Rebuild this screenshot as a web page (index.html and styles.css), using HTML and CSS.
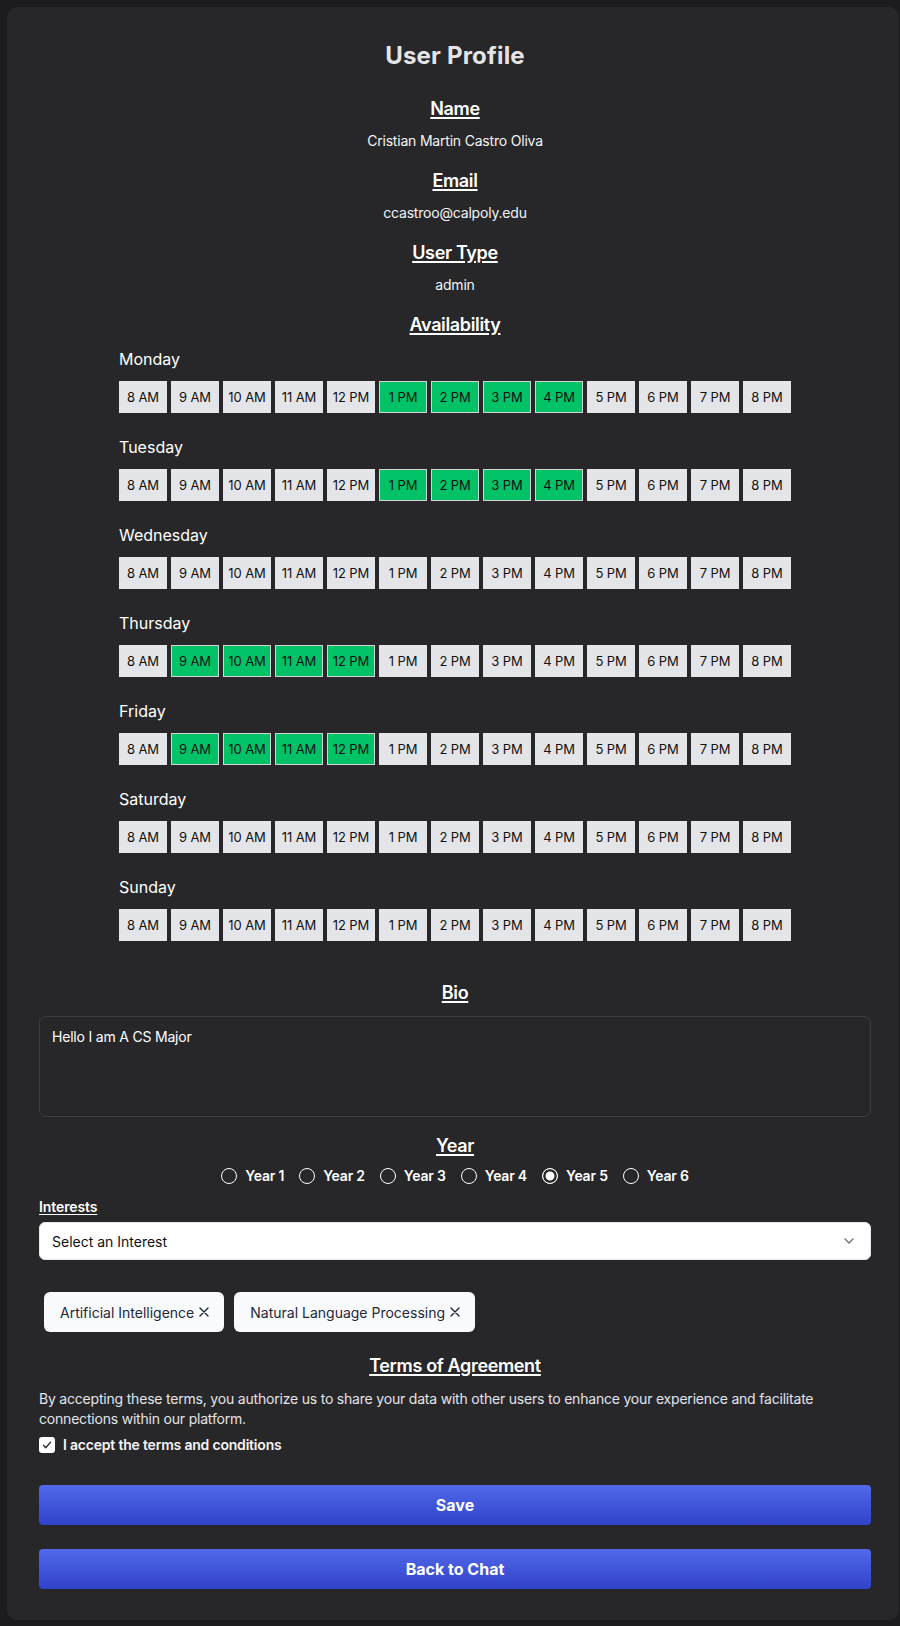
FILE: index.html
```html
<!DOCTYPE html>
<html lang="en">
<head>
<meta charset="utf-8">
<title>User Profile</title>
<link rel="stylesheet" href="styles.css">
</head>
<body>
<main class="card">
  <h1 class="title">User Profile</h1>

  <section class="field">
    <h2 class="label">Name</h2>
    <p class="value">Cristian Martin Castro Oliva</p>
  </section>
  <section class="field">
    <h2 class="label">Email</h2>
    <p class="value">ccastroo@calpoly.edu</p>
  </section>
  <section class="field">
    <h2 class="label">User Type</h2>
    <p class="value">admin</p>
  </section>

  <h2 class="label">Availability</h2>
  <div class="schedule">
    <div class="day">
      <div class="day-name">Monday</div>
      <div class="slots">
        <span class="slot">8 AM</span><span class="slot">9 AM</span><span class="slot">10 AM</span><span class="slot">11 AM</span><span class="slot">12 PM</span><span class="slot on">1 PM</span><span class="slot on">2 PM</span><span class="slot on">3 PM</span><span class="slot on">4 PM</span><span class="slot">5 PM</span><span class="slot">6 PM</span><span class="slot">7 PM</span><span class="slot">8 PM</span>
      </div>
    </div>
    <div class="day">
      <div class="day-name">Tuesday</div>
      <div class="slots">
        <span class="slot">8 AM</span><span class="slot">9 AM</span><span class="slot">10 AM</span><span class="slot">11 AM</span><span class="slot">12 PM</span><span class="slot on">1 PM</span><span class="slot on">2 PM</span><span class="slot on">3 PM</span><span class="slot on">4 PM</span><span class="slot">5 PM</span><span class="slot">6 PM</span><span class="slot">7 PM</span><span class="slot">8 PM</span>
      </div>
    </div>
    <div class="day">
      <div class="day-name">Wednesday</div>
      <div class="slots">
        <span class="slot">8 AM</span><span class="slot">9 AM</span><span class="slot">10 AM</span><span class="slot">11 AM</span><span class="slot">12 PM</span><span class="slot">1 PM</span><span class="slot">2 PM</span><span class="slot">3 PM</span><span class="slot">4 PM</span><span class="slot">5 PM</span><span class="slot">6 PM</span><span class="slot">7 PM</span><span class="slot">8 PM</span>
      </div>
    </div>
    <div class="day">
      <div class="day-name">Thursday</div>
      <div class="slots">
        <span class="slot">8 AM</span><span class="slot on">9 AM</span><span class="slot on">10 AM</span><span class="slot on">11 AM</span><span class="slot on">12 PM</span><span class="slot">1 PM</span><span class="slot">2 PM</span><span class="slot">3 PM</span><span class="slot">4 PM</span><span class="slot">5 PM</span><span class="slot">6 PM</span><span class="slot">7 PM</span><span class="slot">8 PM</span>
      </div>
    </div>
    <div class="day">
      <div class="day-name">Friday</div>
      <div class="slots">
        <span class="slot">8 AM</span><span class="slot on">9 AM</span><span class="slot on">10 AM</span><span class="slot on">11 AM</span><span class="slot on">12 PM</span><span class="slot">1 PM</span><span class="slot">2 PM</span><span class="slot">3 PM</span><span class="slot">4 PM</span><span class="slot">5 PM</span><span class="slot">6 PM</span><span class="slot">7 PM</span><span class="slot">8 PM</span>
      </div>
    </div>
    <div class="day">
      <div class="day-name">Saturday</div>
      <div class="slots">
        <span class="slot">8 AM</span><span class="slot">9 AM</span><span class="slot">10 AM</span><span class="slot">11 AM</span><span class="slot">12 PM</span><span class="slot">1 PM</span><span class="slot">2 PM</span><span class="slot">3 PM</span><span class="slot">4 PM</span><span class="slot">5 PM</span><span class="slot">6 PM</span><span class="slot">7 PM</span><span class="slot">8 PM</span>
      </div>
    </div>
    <div class="day">
      <div class="day-name">Sunday</div>
      <div class="slots">
        <span class="slot">8 AM</span><span class="slot">9 AM</span><span class="slot">10 AM</span><span class="slot">11 AM</span><span class="slot">12 PM</span><span class="slot">1 PM</span><span class="slot">2 PM</span><span class="slot">3 PM</span><span class="slot">4 PM</span><span class="slot">5 PM</span><span class="slot">6 PM</span><span class="slot">7 PM</span><span class="slot">8 PM</span>
      </div>
    </div>
  </div>

  <h2 class="label">Bio</h2>
  <textarea class="bio">Hello I am A CS Major</textarea>

  <h2 class="label year-label">Year</h2>
  <div class="years">
    <label class="year"><span class="radio"></span>Year 1</label>
    <label class="year"><span class="radio"></span>Year 2</label>
    <label class="year"><span class="radio"></span>Year 3</label>
    <label class="year"><span class="radio"></span>Year 4</label>
    <label class="year"><span class="radio checked"></span>Year 5</label>
    <label class="year"><span class="radio"></span>Year 6</label>
  </div>

  <div class="interests-label">Interests</div>
  <div class="select">
    <span>Select an Interest</span>
    <svg class="chevron" width="10" height="6" viewBox="0 0 10 6"><path d="M1 1l4 4 4-4" fill="none" stroke="#6b7280" stroke-width="1.3" stroke-linecap="round" stroke-linejoin="round"/></svg>
  </div>

  <div class="chips">
    <span class="chip">Artificial Intelligence<svg width="10" height="10" viewBox="0 0 10 10"><path d="M1 1l8 8M9 1l-8 8" stroke="#1e293b" stroke-width="1.4" stroke-linecap="round"/></svg></span>
    <span class="chip">Natural Language Processing<svg width="10" height="10" viewBox="0 0 10 10"><path d="M1 1l8 8M9 1l-8 8" stroke="#1e293b" stroke-width="1.4" stroke-linecap="round"/></svg></span>
  </div>

  <h2 class="label terms-label">Terms of Agreement</h2>
  <p class="terms">By accepting these terms, you authorize us to share your data with other users to enhance your experience and facilitate connections within our platform.</p>
  <label class="accept"><span class="checkbox"><svg width="12" height="12" viewBox="0 0 12 12"><path d="M2.5 6.3l2.3 2.4 4.7-5.4" fill="none" stroke="#1f2937" stroke-width="1.3" stroke-linecap="round" stroke-linejoin="round"/></svg></span>I accept the terms and conditions</label>

  <button class="btn save">Save</button>
  <button class="btn back">Back to Chat</button>
</main>
</body>
</html>
```

FILE: styles.css
```css
* { box-sizing: border-box; }

html, body {
  margin: 0;
  background: #1c1c1e;
}

body {
  font-family: Inter, "Liberation Sans", sans-serif;
  color: #fff;
  padding: 7px 1px 6px 7px;
}

.card {
  background: #27272a;
  border-radius: 10px;
  padding: 33px 28px 31px 32px;
  display: flex;
  flex-direction: column;
}

.title {
  margin: 0 0 23px;
  text-align: center;
  font-size: 24px;
  line-height: 32px;
  font-weight: 700;
  letter-spacing: 0.2px;
  color: #e4e4e7;
}

.label {
  margin: 0 0 8px;
  text-align: center;
  font-size: 18px;
  line-height: 28px;
  font-weight: 600;
  letter-spacing: -0.35px;
  color: #fff;
  text-decoration: underline;
  text-decoration-thickness: 1.5px;
  text-underline-offset: 2px;
}

.value {
  margin: 0 0 16px;
  text-align: center;
  font-size: 14px;
  line-height: 20px;
  letter-spacing: -0.2px;
  color: #f4f4f5;
}

.schedule {
  align-self: center;
  margin: 0 0 38px;
}

.day + .day { margin-top: 22px; }

.day-name {
  font-size: 16px;
  line-height: 24px;
  margin-bottom: 10px;
  color: #fff;
}

.slots {
  display: flex;
  gap: 4px;
}

.slot {
  width: 48px;
  height: 32px;
  display: flex;
  align-items: center;
  justify-content: center;
  font-size: 13px;
  letter-spacing: -0.1px;
  color: #111;
  background: #e4e5e9;
  border: 1px solid #e4e5e9;
}

.slot.on {
  background: #02c268;
  border-color: #d4d4d8;
}

.bio {
  display: block;
  width: 100%;
  height: 101px;
  margin: 1px 0 0;
  padding: 10px 12px;
  resize: none;
  background: #27272a;
  border: 1px solid #3c3c41;
  border-radius: 7px;
  color: #fff;
  font-family: inherit;
  font-size: 14px;
  line-height: 20px;
  letter-spacing: -0.2px;
}

.year-label { margin-top: 15px; margin-bottom: 6px; }

.years {
  display: flex;
  justify-content: center;
  gap: 15px;
  height: 20px;
}

.year {
  display: flex;
  align-items: center;
  gap: 8px;
  font-size: 14px;
  line-height: 20px;
  font-weight: 600;
  letter-spacing: -0.2px;
  color: #fff;
}

.radio {
  width: 16px;
  height: 16px;
  border-radius: 50%;
  border: 1.5px solid #fff;
}

.radio.checked {
  background: #fff;
  box-shadow: inset 0 0 0 2.5px #27272a;
}

.interests-label {
  margin-top: 11px;
  font-size: 14px;
  line-height: 20px;
  font-weight: 600;
  letter-spacing: -0.1px;
  text-decoration: underline;
  text-underline-offset: 2px;
}

.select {
  margin-top: 5px;
  height: 38px;
  background: #fff;
  border: 1px solid #e5e7eb;
  border-radius: 6px;
  display: flex;
  align-items: center;
  justify-content: space-between;
  padding: 0 16px 0 12px;
  font-size: 14px;
  color: #111;
}

.chips {
  margin-top: 27px;
  display: flex;
  flex-wrap: wrap;
}

.chip {
  margin: 5px;
  height: 40px;
  display: flex;
  align-items: center;
  gap: 5px;
  padding: 0 15px 0 16px;
  background: #f8fafc;
  border-radius: 6px;
  font-size: 14px;
  color: #1e293b;
}

.terms-label { margin-top: 15px; margin-bottom: 9px; }

.terms {
  margin: 0;
  font-size: 14px;
  line-height: 20px;
  letter-spacing: -0.2px;
  color: #e4e4e7;
}

.accept {
  margin-top: 6px;
  display: flex;
  align-items: center;
  gap: 8px;
  font-size: 14px;
  line-height: 20px;
  font-weight: 600;
  letter-spacing: -0.2px;
  color: #f4f4f5;
}

.checkbox {
  width: 16px;
  height: 16px;
  border-radius: 3px;
  background: #fff;
  display: flex;
  align-items: center;
  justify-content: center;
}

.btn {
  display: block;
  width: 100%;
  height: 40px;
  border: none;
  border-radius: 4px;
  background: linear-gradient(180deg, #5169ea 0%, #3142c9 100%);
  color: #fff;
  font-family: inherit;
  font-size: 16px;
  font-weight: 700;
}

.save { margin-top: 30px; }
.back { margin-top: 24px; }
```
